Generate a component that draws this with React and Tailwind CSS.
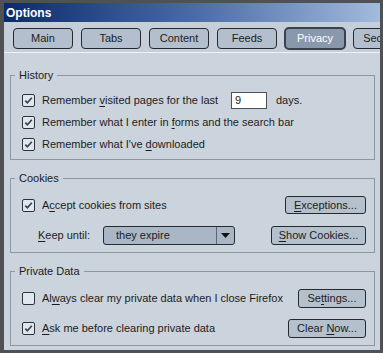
import React from "react";

const Check = ({ checked }) => (
  <span className="flex h-[13px] w-[13px] shrink-0 items-center justify-center rounded-[2px] border border-[#2e3238] bg-[#e1e7ee]">
    {checked && (
      <svg width="9" height="9" viewBox="0 0 9 9">
        <path d="M1.3 4.6 L3.4 6.8 L7.8 1.8" stroke="#3b4350" strokeWidth="1.7" fill="none" />
      </svg>
    )}
  </span>
);

const Key = ({ children }) => <span className="underline underline-offset-2">{children}</span>;

const Row = ({ checked, children }) => (
  <div className="flex h-[22px] items-center">
    <Check checked={checked} />
    <span className="ml-[7px] whitespace-nowrap">{children}</span>
  </div>
);

const Tab = ({ children, active }) =>
  active ? (
    <div className="flex h-[23px] w-[62px] shrink-0 -my-[1px] -mx-[1px] items-center justify-center rounded-[5px] border-2 border-[#39414c] bg-[#8998ad] text-white">
      {children}
    </div>
  ) : (
    <div className="flex h-[21px] w-[60px] shrink-0 items-center justify-center rounded-[4px] border border-[#26292e] bg-[#b3bfcc] text-[#1c1c1c]">
      {children}
    </div>
  );

const Legend = ({ children }) => (
  <legend className="ml-[4px] px-[4px] leading-[12px] text-[#1c1c1c]">{children}</legend>
);

export default function App() {
  return (
    <div className="h-[353px] w-[383px] overflow-hidden bg-[#4f5154] pb-[3px] pl-[4px] pr-[3px] pt-[3px] font-['Liberation_Sans',Arial,sans-serif] text-[11px] text-[#1c1c1c]">
      <div className="flex h-full flex-col bg-[#cbd3dd]">
        <div className="flex h-[19px] items-center bg-gradient-to-r from-[#0b2a6c] via-[#4a6aa6] to-[#a2bbdc] pl-[2px] text-[12px] font-bold text-white">
          Options
        </div>
        <div className="flex h-[30px] gap-[8px] overflow-hidden bg-[#c6ced9] pl-[9px] pt-[6px]">
          <Tab>Main</Tab>
          <Tab>Tabs</Tab>
          <Tab>Content</Tab>
          <Tab>Feeds</Tab>
          <Tab active>Privacy</Tab>
          <Tab>Security</Tab>
        </div>
        <div className="h-px bg-[#eef2f6]" />

        <fieldset className="ml-[6px] mr-[5px] mt-[16px] border border-[#8d97a4]">
          <Legend>History</Legend>
          <div className="pb-[4px] pl-[11px] pr-[8px] pt-[8px]">
            <div className="flex h-[22px] items-center">
              <Check checked />
              <span className="ml-[7px] w-[189px] whitespace-nowrap">
                Remember <Key>v</Key>isited pages for the last
              </span>
              <span className="flex h-[17px] w-[36px] items-center border border-[#4c525a] bg-white pl-[3px]">9</span>
              <span className="ml-[9px]">days.</span>
            </div>
            <Row checked>
              Remember what I enter in <Key>f</Key>orms and the search bar
            </Row>
            <Row checked>
              Remember what I've <Key>d</Key>ownloaded
            </Row>
          </div>
        </fieldset>

        <fieldset className="ml-[6px] mr-[5px] mt-[12px] border border-[#8d97a4]">
          <Legend>Cookies</Legend>
          <div className="pb-[7px] pl-[11px] pr-[8px] pt-[10px]">
            <div className="flex h-[22px] items-center">
              <Check checked />
              <span className="ml-[7px]">
                A<Key>c</Key>cept cookies from sites
              </span>
              <button className="ml-auto h-[18px] w-[81px] rounded-[3px] border border-[#26292e] bg-[#b5c0cd]">
                <Key>E</Key>xceptions...
              </button>
            </div>
            <div className="mt-[9px] flex h-[20px] items-center">
              <span className="ml-[16px]">
                <Key>K</Key>eep until:
              </span>
              <div className="ml-[13px] flex h-[19px] w-[132px] items-center rounded-[3px] border border-[#26292e] bg-[#a9b6c6]">
                <span className="flex-1 pl-[12px]">they expire</span>
                <span className="flex h-full w-[18px] items-center justify-center border-l border-[#5d6673]">
                  <svg width="9" height="5" viewBox="0 0 9 5">
                    <path d="M0 0 L9 0 L4.5 5 Z" fill="#111" />
                  </svg>
                </span>
              </div>
              <button className="ml-auto h-[19px] w-[95px] rounded-[3px] border border-[#26292e] bg-[#b5c0cd]">
                <Key>S</Key>how Cookies...
              </button>
            </div>
          </div>
        </fieldset>

        <fieldset className="ml-[6px] mr-[5px] mt-[12px] border border-[#8d97a4]">
          <Legend>Private Data</Legend>
          <div className="pb-[7px] pl-[11px] pr-[8px] pt-[11px]">
            <div className="flex h-[20px] items-center">
              <Check />
              <span className="ml-[7px]">
                Al<Key>w</Key>ays clear my private data when I close Firefox
              </span>
              <button className="ml-auto h-[19px] w-[68px] rounded-[3px] border border-[#26292e] bg-[#b5c0cd]">
                Se<Key>t</Key>tings...
              </button>
            </div>
            <div className="mt-[10px] flex h-[20px] items-center">
              <Check checked />
              <span className="ml-[7px]">
                <Key>A</Key>sk me before clearing private data
              </span>
              <button className="ml-auto h-[19px] w-[78px] rounded-[3px] border border-[#26292e] bg-[#b5c0cd]">
                Clear <Key>N</Key>ow...
              </button>
            </div>
          </div>
        </fieldset>
      </div>
    </div>
  );
}
